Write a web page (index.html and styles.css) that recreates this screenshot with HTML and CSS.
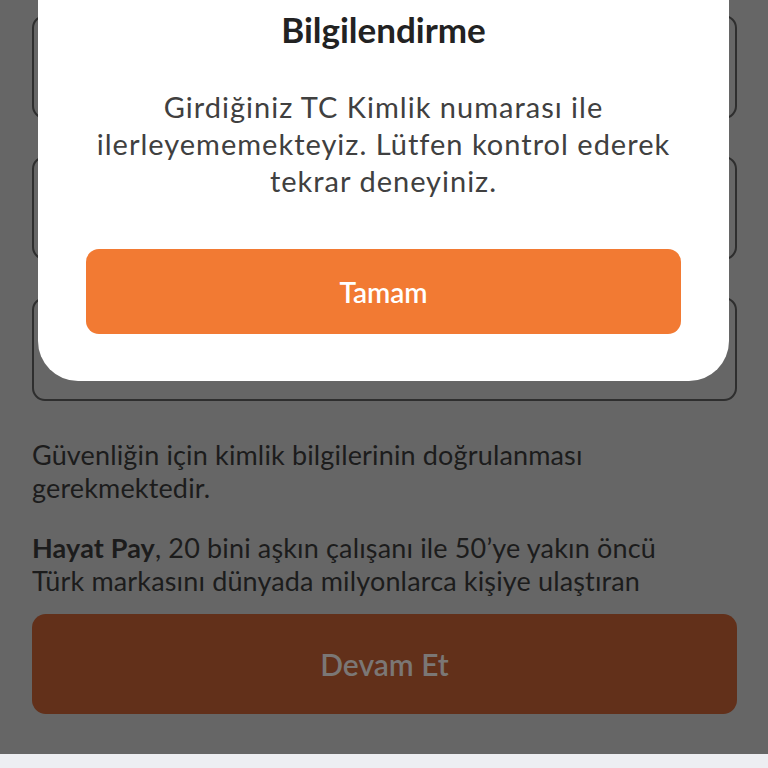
FILE: index.html
```html
<!DOCTYPE html>
<html lang="tr">
<head>
<meta charset="utf-8">
<link rel="stylesheet" href="styles.css">
</head>
<body>
<div class="screen">
  <main class="page">
    <div class="field"></div>
    <div class="field"></div>
    <div class="field"></div>
    <div class="scroll">
      <p class="info">Güvenliğin için kimlik bilgilerinin doğrulanması gerekmektedir.</p>
      <p class="info"><b>Hayat Pay</b>, 20 bini aşkın çalışanı ile 50’ye yakın öncü Türk markasını dünyada milyonlarca kişiye ulaştıran</p>
    </div>
    <button class="continue">Devam Et</button>
  </main>
  <div class="navbar"></div>
  <div class="modal">
    <h2 class="modal-title">Bilgilendirme</h2>
    <p class="modal-text">Girdiğiniz TC Kimlik numarası ile ilerleyememekteyiz. Lütfen kontrol ederek tekrar deneyiniz.</p>
    <button class="ok">Tamam</button>
  </div>
</div>
</body>
</html>
```

FILE: styles.css
```css
* { box-sizing: border-box; }
html, body { margin: 0; padding: 0; }
body {
  width: 768px;
  height: 768px;
  overflow: hidden;
  font-family: Lato, "Open Sans", sans-serif;
  background: #666666;
}
.screen {
  position: relative;
  width: 768px;
  height: 768px;
  display: flex;
  flex-direction: column;
}
.page {
  height: 754px;
  padding: 15px 31px 0 32px;
  display: flex;
  flex-direction: column;
}
.field {
  height: 104px;
  border: 2px solid #2e2e2e;
  border-radius: 13px;
  margin-bottom: 37px;
  flex-shrink: 0;
}
.field:nth-of-type(3) { margin-bottom: 0; }
.scroll {
  margin-top: 37px;
  height: 176px;
  padding-right: 30px;
  overflow: hidden;
}
.info {
  margin: 0 0 27px;
  font-size: 27px;
  line-height: 33px;
  letter-spacing: 0.15px;
  color: #1c1c1c;
}
.info b { font-weight: 700; }
.continue {
  height: 100px;
  border: none;
  border-radius: 14px;
  background: #62301a;
  color: #7b7775;
  font-family: Lato, "Open Sans", sans-serif;
  font-size: 30px;
  font-weight: 600;
  padding: 0;
}
.navbar {
  height: 14px;
  background: #edeef2;
}
.modal {
  position: absolute;
  top: 0;
  left: 38px;
  width: 691px;
  background: #ffffff;
  border-radius: 0 0 40px 40px;
  padding: 8px 48px 47px;
  display: flex;
  flex-direction: column;
  align-items: stretch;
  text-align: center;
}
.modal-title {
  margin: 0;
  font-size: 35px;
  line-height: 42px;
  font-weight: 700;
  color: #222222;
}
.modal-text {
  margin: 38px 0 50px;
  font-size: 29px;
  line-height: 37px;
  letter-spacing: 1px;
  color: #404040;
}
.ok {
  height: 85px;
  border: none;
  border-radius: 13px;
  background: #f27a33;
  color: #ffffff;
  font-family: Lato, "Open Sans", sans-serif;
  font-size: 28px;
  font-weight: 600;
  padding: 0;
}
```
